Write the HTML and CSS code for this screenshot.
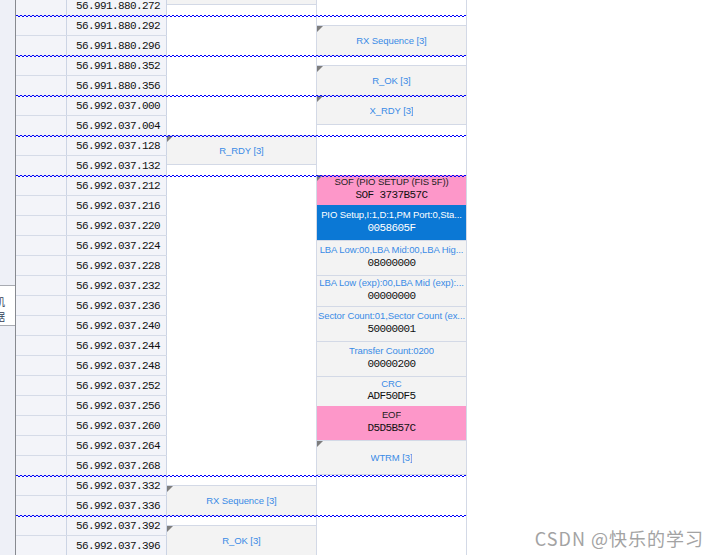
FILE: index.html
```html
<!DOCTYPE html>
<html lang="zh-CN">
<head>
<meta charset="utf-8">
<title>Trace</title>
<link rel="stylesheet" href="styles.css">
</head>
<body>
<div class="screen">
  <aside class="gutter">
    <div class="tab"><span>机</span><span>据</span></div>
  </aside>

  <div class="trace">
    <div class="rows">
      <div class="row"><div class="id"></div><div class="ts">56.991.880.272</div></div>
      <div class="row"><div class="id"></div><div class="ts">56.991.880.292</div></div>
      <div class="row"><div class="id"></div><div class="ts">56.991.880.296</div></div>
      <div class="row"><div class="id"></div><div class="ts">56.991.880.352</div></div>
      <div class="row"><div class="id"></div><div class="ts">56.991.880.356</div></div>
      <div class="row"><div class="id"></div><div class="ts">56.992.037.000</div></div>
      <div class="row"><div class="id"></div><div class="ts">56.992.037.004</div></div>
      <div class="row"><div class="id"></div><div class="ts">56.992.037.128</div></div>
      <div class="row"><div class="id"></div><div class="ts">56.992.037.132</div></div>
      <div class="row"><div class="id"></div><div class="ts">56.992.037.212</div></div>
      <div class="row"><div class="id"></div><div class="ts">56.992.037.216</div></div>
      <div class="row"><div class="id"></div><div class="ts">56.992.037.220</div></div>
      <div class="row"><div class="id"></div><div class="ts">56.992.037.224</div></div>
      <div class="row"><div class="id"></div><div class="ts">56.992.037.228</div></div>
      <div class="row"><div class="id"></div><div class="ts">56.992.037.232</div></div>
      <div class="row"><div class="id"></div><div class="ts">56.992.037.236</div></div>
      <div class="row"><div class="id"></div><div class="ts">56.992.037.240</div></div>
      <div class="row"><div class="id"></div><div class="ts">56.992.037.244</div></div>
      <div class="row"><div class="id"></div><div class="ts">56.992.037.248</div></div>
      <div class="row"><div class="id"></div><div class="ts">56.992.037.252</div></div>
      <div class="row"><div class="id"></div><div class="ts">56.992.037.256</div></div>
      <div class="row"><div class="id"></div><div class="ts">56.992.037.260</div></div>
      <div class="row"><div class="id"></div><div class="ts">56.992.037.264</div></div>
      <div class="row"><div class="id"></div><div class="ts">56.992.037.268</div></div>
      <div class="row"><div class="id"></div><div class="ts">56.992.037.332</div></div>
      <div class="row"><div class="id"></div><div class="ts">56.992.037.336</div></div>
      <div class="row"><div class="id"></div><div class="ts">56.992.037.392</div></div>
      <div class="row"><div class="id"></div><div class="ts">56.992.037.396</div></div>
    </div>

    <div class="lane">
      <div class="ev stub"></div>
      <div class="gap g130"></div>
      <div class="ev mark h30"><span class="lbl">R_RDY [3]</span></div>
      <div class="gap g320"></div>
      <div class="ev mark h31"><span class="lbl">RX Sequence [3]</span></div>
      <div class="gap g9"></div>
      <div class="ev mark h31"><span class="lbl">R_OK [3]</span></div>
    </div>

    <div class="lane">
      <div class="gap g25"></div>
      <div class="ev mark h31"><span class="lbl">RX Sequence [3]</span></div>
      <div class="gap g9"></div>
      <div class="ev mark h31"><span class="lbl">R_OK [3]</span></div>
      <div class="ev mark h29 notop"><span class="lbl">X_RDY [3]</span></div>
      <div class="gap g50"></div>
      <div class="cell pink mark h30"><span class="lbl">SOF (PIO SETUP (FIS 5F))</span><span class="val">SOF 3737B57C</span></div>
      <div class="cell sel h35"><span class="lbl">PIO Setup,I:1,D:1,PM Port:0,Sta...</span><span class="val">0058605F</span></div>
      <div class="cell data h35"><span class="lbl">LBA Low:00,LBA Mid:00,LBA Hig...</span><span class="val">08000000</span></div>
      <div class="cell data h31"><span class="lbl">LBA Low (exp):00,LBA Mid (exp):...</span><span class="val">00000000</span></div>
      <div class="cell data h35"><span class="lbl">Sector Count:01,Sector Count (ex...</span><span class="val">50000001</span></div>
      <div class="cell data h35"><span class="lbl">Transfer Count:0200</span><span class="val">00000200</span></div>
      <div class="cell data h30"><span class="lbl">CRC</span><span class="val">ADF50DF5</span></div>
      <div class="cell pink h34"><span class="lbl">EOF</span><span class="val">D5D5B57C</span></div>
      <div class="ev mark h35"><span class="lbl">WTRM [3]</span></div>
    </div>

    <div class="wave w15"></div>
    <div class="wave w55"></div>
    <div class="wave w95"></div>
    <div class="wave w135"></div>
    <div class="wave w175"></div>
    <div class="wave w475"></div>
    <div class="wave w515"></div>
  </div>

  <div class="blank">
    <div class="watermark">CSDN @快乐的学习</div>
  </div>
</div>
</body>
</html>
```

FILE: styles.css
```css
html, body {
  margin: 0;
  padding: 0;
  background: #ffffff;
  overflow: hidden;
}

.screen {
  display: flex;
  width: 718px;
  height: 555px;
  overflow: hidden;
}

/* left gutter with the cut-off side tab */
.gutter {
  width: 15px;
  flex: none;
  background: #eef0f7;
  border-right: 1px solid #878a90;
  display: flex;
  flex-direction: column;
  padding-top: 285px;
  box-sizing: content-box;
}
.tab {
  height: 41px;
  background: #ffffff;
  border-top: 1px solid #a8abb2;
  border-bottom: 1px solid #a8abb2;
  display: flex;
  flex-direction: column;
  padding-top: 8px;
  box-sizing: border-box;
  overflow: hidden;
}
.tab span {
  font-family: "Noto Sans CJK SC", sans-serif;
  font-size: 10px;
  line-height: 15px;
  height: 15px;
  color: #2f3d58;
  margin-left: -5px;
}

/* trace area */
.trace {
  position: relative;
  display: flex;
  flex: none;
  width: 451px;
  height: 555px;
  overflow: hidden;
}

.rows {
  width: 151px;
  flex: none;
  margin-top: -4px;
  background: #f3f4f9;
}
.row {
  display: flex;
  height: 20px;
  box-sizing: border-box;
  border-bottom: 1px solid #d5dbe8;
}
.row .id {
  width: 51px;
  box-sizing: border-box;
  border-right: 1px solid #ccd4e4;
}
.row .ts {
  width: 100px;
  box-sizing: border-box;
  border-right: 1px solid #ccd4e4;
  text-align: right;
  padding-right: 6px;
  font-family: "Liberation Mono", monospace;
  font-size: 11px;
  letter-spacing: -0.6px;
  line-height: 20px;
  color: #111111;
}

.lane {
  width: 150px;
  flex: none;
  box-sizing: border-box;
  border-right: 1px solid #d3d9e6;
  display: flex;
  flex-direction: column;
}

.gap { flex: none; }
.g9 { height: 9px; }
.g25 { height: 25px; }
.g50 { height: 50px; }
.g130 { height: 130px; }
.g320 { height: 320px; }

.h29 { height: 29px; }
.h30 { height: 30px; }
.h31 { height: 31px; }
.h34 { height: 34px; }
.h35 { height: 35px; }

.ev {
  flex: none;
  position: relative;
  box-sizing: border-box;
  background: #f3f3f3;
  border-top: 1px solid #d3d9e6;
  border-bottom: 1px solid #d3d9e6;
  display: flex;
  align-items: center;
  justify-content: center;
}
.ev.notop { border-top: 0; }
.stub {
  height: 5px;
  border-top: 0;
}

.mark::before {
  content: "";
  position: absolute;
  left: 0;
  top: 0;
  width: 0;
  height: 0;
  border-top: 6px solid #7d7d7d;
  border-right: 6px solid transparent;
}

.lbl {
  font-family: "Liberation Sans", Arial, sans-serif;
  font-size: 9.5px;
  letter-spacing: -0.1px;
  line-height: 13px;
  color: #3a8be6;
  white-space: nowrap;
  overflow: hidden;
  max-width: 149px;
}

.cell {
  flex: none;
  position: relative;
  box-sizing: border-box;
  display: flex;
  flex-direction: column;
  align-items: center;
  justify-content: center;
  padding-bottom: 3px;
  overflow: hidden;
}
.cell .val {
  font-family: "Liberation Mono", monospace;
  font-size: 11px;
  letter-spacing: -0.6px;
  line-height: 14px;
  color: #111111;
  white-space: nowrap;
}
.cell.data {
  background: #f3f3f3;
  border-top: 1px solid #d3d9e6;
}
.cell.pink {
  background: #fd97c9;
}
.cell.pink .lbl { color: #222222; }
.cell.sel {
  background: #0b78d5;
}
.cell.sel .lbl,
.cell.sel .val { color: #ffffff; }

/* group separators lying over the lanes */
.wave {
  position: absolute;
  left: 0;
  width: 450px;
  height: 2px;
  background:
    repeating-linear-gradient(90deg, #0000ff 0 2px, transparent 2px 4px) 0 0 / 100% 1px no-repeat,
    repeating-linear-gradient(90deg, transparent 0 2px, #0000ff 2px 4px) 0 1px / 100% 1px no-repeat;
}
.w15 { top: 15px; }
.w55 { top: 55px; }
.w95 { top: 95px; }
.w135 { top: 135px; }
.w175 { top: 175px; }
.w475 { top: 475px; }
.w515 { top: 515px; }

.blank {
  flex: 1;
  display: flex;
  flex-direction: column;
  justify-content: flex-end;
  align-items: flex-end;
  padding: 0 14px 6px 0;
}
.watermark {
  font-family: "Noto Sans CJK SC", sans-serif;
  font-size: 18px;
  letter-spacing: 1px;
  line-height: 22px;
  color: #a3a3a3;
  white-space: nowrap;
}
```
